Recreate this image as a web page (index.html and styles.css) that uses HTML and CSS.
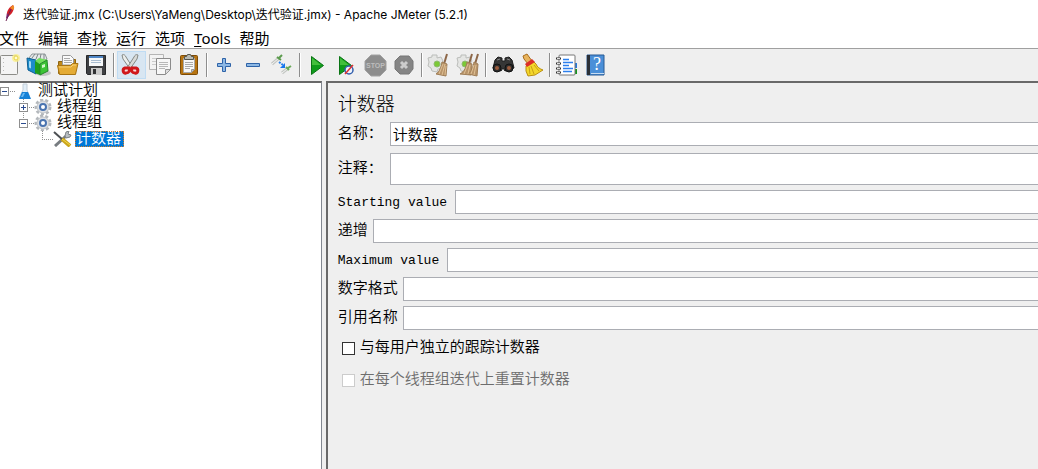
FILE: index.html
```html
<!DOCTYPE html>
<html lang="zh-CN">
<head>
  <meta charset="UTF-8">
  <meta name="viewport" content="width=device-width, initial-scale=1">
  <title>Apache JMeter (5.2.1)</title>
  <link rel="stylesheet" href="styles.css">
</head>
<body>
  <header class="titlebar">
    <svg class="app-icon" width="14" height="18" viewBox="0 0 14 18">
      <path d="M5 12C4 8 7 3 11 1c2 3 0 8-4 11z" fill="#d22128"/>
      <path d="M8 4l3-3c2 2 1 4 0 5z" fill="#f08a24"/>
      <path d="M5 9l2 3-2 3-1-1z" fill="#7c2a7a"/>
      <path d="M9 5L4 17" stroke="#6d2052"/>
    </svg>
    <span>迭代验证.jmx (C:\Users\YaMeng\Desktop\迭代验证.jmx) - Apache JMeter (5.2.1)</span>
  </header>

  <nav class="menubar">
    <button>文件</button>
    <button>编辑</button>
    <button>查找</button>
    <button>运行</button>
    <button>选项</button>
    <button><u>T</u>ools</button>
    <button>帮助</button>
  </nav>

  <div class="toolbar">
    <button aria-label="新建">
      <svg viewBox="0 0 29 28">
        <rect x="5.500" y="4.500" width="17" height="19" rx="1" fill="#f4f4f4" stroke="#8c8c88"/>
        <path d="M8.500 7v15" stroke="#bbb" stroke-dasharray="1 3"/>
        <circle cx="21" cy="7" r="4" fill="#fbf08a" opacity=".8"/>
        <circle cx="21" cy="7" r="2" fill="#fffbd0" stroke="#e8d44d"/>
      </svg>
    </button>
    <button aria-label="模板">
      <svg viewBox="0 0 29 28">
        <ellipse cx="19" cy="22" rx="8" ry="3" fill="#c4c4c4"/>
        <path d="M5 7l3-4 13 0 2 5-8 4z" fill="#e6e9ea" stroke="#8e9699"/>
        <path d="M8 7l3-4M12 8l2-5M16 8l1-5M20 8V3" stroke="#7d8587"/>
        <path d="M3 7l9 2v14l-8-4z" fill="#1d8ccb" stroke="#0d5e93"/>
        <path d="M5 10l2 .5v7l-2-1z" fill="#9fdaf6"/>
        <path d="M11 10l4-3 9 2-8 4z" fill="#73e05d"/>
        <path d="M11 10l5 3v11l-5-2z" fill="#1f9e1d"/>
        <path d="M16 13l7-4 1 11-8 4z" fill="#3cc435" stroke="#24872a"/>
        <path d="M18 14l3-1v3l-3 1z" fill="#d3f7cc"/>
      </svg>
    </button>
    <button aria-label="打开">
      <svg viewBox="0 0 29 28">
        <path d="M5.500 10.500h4l1-2h12v14h-17z" fill="#c08a1b" stroke="#8f6410"/>
        <path d="M9.500 14V4.500h8l3 3V14z" fill="#fafafa" stroke="#999"/>
        <path d="M11 7.500h6M11 9.500h8M11 11.500h8" stroke="#aaa"/>
        <path d="M4.500 14.500h13l2-2h5.500l-2.500 11h-16z" fill="#e4ab35" stroke="#a87514"/>
        <path d="M6 16h12l2-2h3" fill="none" stroke="#f5cf77"/>
      </svg>
    </button>
    <button aria-label="保存">
      <svg viewBox="0 0 29 28">
        <path d="M4.500 4.500h19v19h-18l-1-1z" fill="#3f4043" stroke="#28292b"/>
        <path d="M7 5h14v10H7z" fill="#f5f7f9"/>
        <path d="M7 5h14v2H7z" fill="#4f86c6"/>
        <path d="M9 9.500h10M9 11.500h10" stroke="#a8bcd0"/>
        <path d="M9 17h11v7H9z" fill="#c9c9c9"/>
        <path d="M11 18h3v5h-3z" fill="#303134"/>
      </svg>
    </button>
    <span class="separator"></span>
    <button class="active" aria-label="剪切">
      <svg viewBox="0 0 29 28">
        <path d="M5 4c2-1 3 0 4 2l7 11-3 1L6 8z" fill="#eceeec" stroke="#858985"/>
        <path d="M21 4c-2-1-3 0-4 2l-7 11 3 1 7-10z" fill="#d8dad8" stroke="#858985"/>
        <path d="M12 17l-4 0c-3 1-2 6 1 5 3 0 4-2 3-5zM15 17l4 0c3 1 2 6-1 5-3 0-4-2-3-5z" fill="#f8dcdc" stroke="#d0181c" stroke-width="3"/>
      </svg>
    </button>
    <button aria-label="复制">
      <svg viewBox="0 0 29 28">
        <path d="M3.500 3.500h14v15h-14z" fill="#f3f3f3" stroke="#b5b5b5"/>
        <path d="M6 7.500h8M6 10.500h8M6 13.500h6" stroke="#ccc"/>
        <path d="M10.500 7.500h14v11l-5 5h-9z" fill="#f7f7f7" stroke="#8b8b8b"/>
        <path d="M13 11.500h9M13 13.500h9M13 15.500h9M13 17.500h6" stroke="#b8b8b8"/>
        <path d="M19.500 23.500v-5h5z" fill="#ddd" stroke="#999"/>
      </svg>
    </button>
    <button aria-label="粘贴">
      <svg viewBox="0 0 29 28">
        <rect x="5.500" y="4.500" width="17" height="19" rx="1" fill="#b77411" stroke="#7d4c08"/>
        <path d="M8.500 7.500h11v11l-3 3h-8z" fill="#f8f8f8" stroke="#aaa"/>
        <path d="M10 11.500h8M10 13.500h8M10 15.500h8M10 17.500h5" stroke="#aaa"/>
        <path d="M16.500 21.500v-3h3z" fill="#ccc" stroke="#999"/>
        <path d="M9.500 8.500v-3h2l1-2h3l1 2h2v3z" fill="#b9bbb5" stroke="#55574f"/>
      </svg>
    </button>
    <span class="separator"></span>
    <button aria-label="展开">
      <svg viewBox="0 0 29 28">
        <path d="M12.500 7.500h3v5h5v3h-5v5h-3v-5h-5v-3h5z" fill="#8db8e4" stroke="#2e63a8"/>
      </svg>
    </button>
    <button aria-label="折叠">
      <svg viewBox="0 0 29 28">
        <path d="M7.500 12.500h13v3h-13z" fill="#8db8e4" stroke="#2e63a8"/>
      </svg>
    </button>
    <button aria-label="切换">
      <svg viewBox="0 0 29 28">
        <path d="M4 13l7-6" stroke="#c3c6c3" stroke-width="3"/>
        <path d="M4 13l7-6" stroke="#f4f5f4"/>
        <path d="M9 6l4 3M11 7l3-3" stroke="#5c9c4e" stroke-width="2"/>
        <path d="M14 22l5-4" stroke="#c3c6c3" stroke-width="3"/>
        <path d="M14 22l5-4" stroke="#f4f5f4"/>
        <path d="M18 16l3 3M20 17l3-2" stroke="#69a957" stroke-width="2"/>
        <path d="M11 11l4 3" stroke="#2680ec" stroke-width="2" stroke-dasharray="2 1"/>
        <path d="M17 12v5h-5z" fill="#1676ed"/>
      </svg>
    </button>
    <span class="separator"></span>
    <button aria-label="启动">
      <svg viewBox="0 0 29 28">
        <path d="M8.500 5.500l12 9-12 9z" fill="#0f9c1b" stroke="#0a7414"/>
        <path d="M9 7l9 7H9z" fill="#42bf3c"/>
      </svg>
    </button>
    <button aria-label="不停顿开始">
      <svg viewBox="0 0 29 28">
        <path d="M7.500 5.500l12 9-12 9z" fill="#0f9c1b" stroke="#0a7414"/>
        <path d="M8 7l9 7H8z" fill="#42bf3c"/>
        <circle cx="17" cy="19" r="4" fill="#edf2fa" stroke="#315eac" stroke-width="1.500"/>
        <path d="M13 23l8-9" stroke="#e03030" stroke-width="1.500"/>
      </svg>
    </button>
    <button aria-label="停止" disabled>
      <svg viewBox="0 0 29 28">
        <path d="M10 4h9l6 6v9l-6 6h-9l-6-6v-9z" fill="#8d8d8d" stroke="#a2a2a2"/>
        <text class="stop-text" x="14.500" y="17" text-anchor="middle">STOP</text>
      </svg>
    </button>
    <button aria-label="关闭" disabled>
      <svg viewBox="0 0 29 28">
        <path d="M10 5h9l4 5v8l-4 5h-9l-5-5v-8z" fill="#858585" stroke="#777"/>
        <path d="M11 11l6 6M17 11l-6 6" stroke="#ccc" stroke-width="3"/>
      </svg>
    </button>
    <span class="separator"></span>
    <button aria-label="清除">
      <svg viewBox="0 0 29 28">
        <path d="M7 4h5v3l4-1 2 4-2 3 1 4-4 1-1 3-5-1-1-3-3-2 1-4-1-4 4-1z" fill="#e5e6e4" stroke="#bbbdba"/>
        <circle cx="12" cy="13" r="3" fill="#7bc936" stroke="#8fba70"/>
        <path d="M22 3l-3 10" stroke="#8d6748" stroke-width="2"/>
        <path d="M17 11l5 2-1 12-10-2c4-3 5-7 6-12z" fill="#b8946a" stroke="#a07f58"/>
        <path d="M18 13l-4 10M20 13l-3 11M21 15l-1 9" stroke="#dfc094"/>
      </svg>
    </button>
    <button aria-label="清除全部">
      <svg viewBox="0 0 29 28">
        <path d="M7 4h5v3l4-1 2 4-2 3 1 4-4 1-1 3-5-1-1-3-3-2 1-4-1-4 4-1z" fill="#e5e6e4" stroke="#bbbdba"/>
        <circle cx="11" cy="13" r="3" fill="#7bc936" stroke="#8fba70"/>
        <path d="M18 3l-3 10M24 3l-3 10" stroke="#8d6748" stroke-width="2"/>
        <path d="M13 11l5 2-1 11-11-1c5-3 6-7 7-12z" fill="#b8946a" stroke="#a07f58"/>
        <path d="M20 11l4 2-1 12-9-2c4-3 5-7 6-12z" fill="#b8946a" stroke="#a07f58"/>
        <path d="M14 13l-4 10M16 14l-2 9M20 14l-3 9M22 14l-2 10" stroke="#dfc094"/>
      </svg>
    </button>
    <span class="separator"></span>
    <button aria-label="查找">
      <svg viewBox="0 0 29 28">
        <path d="M6 9l3-3 4 1v3h3V7l4-1 3 3 2 8-9 3-2-3-2 3-8-3z" fill="#363636" stroke="#1d1d1d"/>
        <path d="M8 9l3-1M18 8l3 1" stroke="#888"/>
        <circle cx="8" cy="17" r="4" fill="#2c2c2c" stroke="#111"/>
        <circle cx="20" cy="17" r="4" fill="#2c2c2c" stroke="#111"/>
        <circle cx="8" cy="17" r="2" fill="#9b5b3d"/>
        <circle cx="20" cy="17" r="2" fill="#9b5b3d"/>
      </svg>
    </button>
    <button aria-label="重置查找">
      <svg viewBox="0 0 29 28">
        <path d="M5 5l4-2 5 7-4 3-4-5z" fill="#e8b45d" stroke="#a96c1c"/>
        <path d="M8 15l7-5 3 3c1 3 4 5 7 6l-8 5-7 1-2-5z" fill="#f3d72b" stroke="#b98e13"/>
        <path d="M11 16l1 7M13 15l3 8M16 14l5 6" stroke="#c89f16"/>
        <path d="M7 13l7-5 3 3-8 5z" fill="#dc2e28"/>
      </svg>
    </button>
    <span class="separator"></span>
    <button aria-label="函数助手对话框">
      <svg viewBox="0 0 29 28">
        <path d="M20 12h4v5h-4z" fill="#2678da"/>
        <path d="M20 18h4v5h-4z" fill="#14951c"/>
        <rect x="6" y="4" width="16" height="20" rx="1" fill="#fff" stroke="#777"/>
        <path d="M10 8.500h6M10 11.500h10M10 14.500h6M10 17.500h10M10 20.500h9" stroke="#2d80ed" stroke-width="1.500"/>
        <path d="M3 7.500h5M3 12.500h5M3 17.500h5M3 21.500h5" stroke="#333" stroke-width="2"/>
        <path d="M4 7.500h3M4 12.500h3M4 17.500h3M4 21.500h3" stroke="#ddd"/>
      </svg>
    </button>
    <button aria-label="帮助">
      <svg viewBox="0 0 29 28">
        <path d="M5 4h17v20H5z" fill="#4a8fd8" stroke="#285b94"/>
        <path d="M5 4h3v20H5z" fill="#2b3037"/>
        <path d="M9 22.500h13" stroke="#c7dcf2"/>
        <text class="help-text" x="15" y="19" text-anchor="middle">?</text>
      </svg>
    </button>
  </div>

  <main class="workspace">
    <aside class="tree-panel">
      <ul class="tree">
        <li>
          <div class="node">
            <button class="expander" aria-label="折叠">
              <svg viewBox="0 0 15 16">
                <path d="M10 8.500h5" class="dots"/>
                <rect x=".5" y="4.500" width="8" height="8" class="box"/>
                <path d="M2 8.500h5" class="sign"/>
              </svg>
            </button>
            <svg class="node-icon" viewBox="0 0 19 16">
              <path d="M8 1h4v6l3 8H4l4-8z" fill="#e2eef8" stroke="#c3ced8"/>
              <path d="M7 9h6l3 7H4z" fill="#1681d6"/>
              <path d="M8 10h2l-2 4H6z" fill="#65b7f3"/>
            </svg>
            <span class="node-label">测试计划</span>
          </div>
          <ul>
            <li>
              <div class="node">
                <button class="expander" aria-label="展开">
                  <svg viewBox="0 0 15 16">
                    <path d="M4.500 0v16M10 8.500h5" class="dots"/>
                    <rect x=".5" y="4.500" width="8" height="8" class="box"/>
                    <path d="M2 8.500h5M4.500 6v5" class="sign"/>
                  </svg>
                </button>
                <svg class="node-icon" viewBox="0 0 19 16">
                  <circle cx="9" cy="8" r="7" class="teeth"/>
                  <circle cx="9" cy="8" r="6" fill="#dde0e4" stroke="#c2c6ca"/>
                  <circle cx="9" cy="8" r="3" fill="#fff" stroke="#4a74b0" stroke-width="2"/>
                </svg>
                <span class="node-label">线程组</span>
              </div>
            </li>
            <li>
              <div class="node">
                <button class="expander" aria-label="折叠">
                  <svg viewBox="0 0 15 16">
                    <path d="M4.500 0v5M10 8.500h5" class="dots"/>
                    <rect x=".5" y="4.500" width="8" height="8" class="box"/>
                    <path d="M2 8.500h5" class="sign"/>
                  </svg>
                </button>
                <svg class="node-icon" viewBox="0 0 19 16">
                  <circle cx="9" cy="8" r="7" class="teeth"/>
                  <circle cx="9" cy="8" r="6" fill="#dde0e4" stroke="#c2c6ca"/>
                  <circle cx="9" cy="8" r="3" fill="#fff" stroke="#4a74b0" stroke-width="2"/>
                </svg>
                <span class="node-label">线程组</span>
              </div>
              <ul>
                <li>
                  <div class="node">
                    <svg class="branch" viewBox="0 0 15 16">
                      <path d="M4.500 0v9M4 8.500h11" class="dots"/>
                    </svg>
                    <svg class="node-icon" viewBox="0 0 19 16">
                      <path d="M2 15L13 5" stroke="#777c80" stroke-width="3"/>
                      <path d="M12 5l1-4 3-1-1 3 3 1-1 2-4 1z" fill="#b9bfc3" stroke="#7c8286"/>
                      <path d="M1 1l9 8" stroke="#4b4f52" stroke-width="2"/>
                      <path d="M9 8l8 7" stroke="#caa51c" stroke-width="4"/>
                      <path d="M9 8l8 6" stroke="#f4d94d"/>
                    </svg>
                    <span class="node-label selected">计数器</span>
                  </div>
                </li>
              </ul>
            </li>
          </ul>
        </li>
      </ul>
    </aside>

    <form class="editor">
      <h1>计数器</h1>
      <div class="field">
        <label class="short" for="name">名称：</label>
        <input type="text" id="name" value="计数器">
      </div>
      <div class="field comment">
        <label class="short" for="comment">注释：</label>
        <textarea id="comment" rows="1"></textarea>
      </div>
      <div class="field">
        <label class="start" for="start">Starting value</label>
        <input type="text" id="start">
      </div>
      <div class="field">
        <label for="increment">递增</label>
        <input type="text" id="increment">
      </div>
      <div class="field">
        <label class="max" for="max">Maximum value</label>
        <input type="text" id="max">
      </div>
      <div class="field">
        <label for="format">数字格式</label>
        <input type="text" id="format">
      </div>
      <div class="field">
        <label for="reference">引用名称</label>
        <input type="text" id="reference">
      </div>
      <div class="check">
        <input type="checkbox" id="per-user">
        <label for="per-user">与每用户独立的跟踪计数器</label>
      </div>
      <div class="check">
        <input type="checkbox" id="reset" disabled>
        <label for="reset">在每个线程组迭代上重置计数器</label>
      </div>
    </form>
  </main>
</body>
</html>
```
FILE: styles.css
```css
:root {
  --panel-bg: #efefef;
  --line: #a0a0a0;
  --dark-line: #696969;
  --field-border: #abadb3;
  --selection: #0078d7;
  --ui-font: "Noto Sans", "Noto Sans CJK SC", sans-serif;
  --form-font: "Liberation Mono", "Noto Sans CJK SC", monospace;
}
* { box-sizing: border-box; }
body {
  margin: 0;
  min-height: 100vh;
  display: flex;
  flex-direction: column;
  overflow: hidden;
  background-color: #fff;
  color: #000;
  font-family: var(--ui-font);
}
button {
  padding: 0;
  border: 0;
  background: none;
  color: inherit;
  font: inherit;
}
svg {
  display: block;
  fill: none;
}
.titlebar {
  display: flex;
  align-items: center;
  gap: 7px;
  height: 26px;
  padding-left: 2px;
  font: 12px Inter, "Noto Sans CJK SC", sans-serif;
  white-space: nowrap;
}
.menubar {
  display: flex;
  align-items: center;
  gap: 9px;
  height: 23px;
  margin-left: -1px;
  padding-top: 2px;
  border-bottom: 1px solid var(--line);
  font-size: 15px;
  line-height: 20px;
}
.menubar u {
  text-underline-offset: 2px;
}
.toolbar {
  display: flex;
  align-items: center;
  height: 32px;
  background-color: var(--panel-bg);
}
.toolbar button {
  flex: none;
  width: 29px;
  height: 28px;
}
.toolbar button:first-child {
  margin-left: -5px;
}
.toolbar button.active {
  background-color: #d8e6f2;
  outline: 1px solid #c0dcf3;
  outline-offset: -1px;
}
.separator {
  flex: none;
  width: 2px;
  height: 24px;
  margin: 0 2px;
  border-left: 1px solid #8d8d8d;
  border-right: 1px solid #fff;
}
.stop-text {
  fill: #bdbdbd;
  font: bold 7px "Liberation Sans", sans-serif;
}
.help-text {
  fill: #fff;
  font: 18px "Liberation Serif", serif;
}
.workspace {
  flex: 1;
  display: flex;
  gap: 4px;
  background-color: var(--panel-bg);
}
.tree-panel {
  flex: none;
  width: 31%;
  border-top: 2px solid var(--dark-line);
  border-right: 1px solid #828790;
  background-color: #fff;
}
.tree,
.tree ul {
  margin: 0;
  padding: 0;
  list-style: none;
}
.tree ul {
  padding-left: 19px;
}
.node {
  display: flex;
  align-items: center;
  height: 16px;
  font: 350 15px/18px var(--form-font);
}
.expander,
.branch {
  width: 15px;
  height: 16px;
}
.node-icon {
  width: 19px;
  height: 16px;
  margin-right: 3px;
}
.node-label {
  height: 16px;
  padding: 0 3px 0 1px;
}
.node-label.selected {
  background-color: var(--selection);
  color: #fff;
  outline: 1px dotted #d98028;
  outline-offset: -1px;
}
.dots {
  stroke: #909090;
  stroke-dasharray: 1 1;
}
.box {
  fill: #fff;
  stroke: #8f8f8f;
}
.sign {
  stroke: #2b4b8f;
}
.teeth {
  stroke: #b4b8bc;
  stroke-width: 3;
  stroke-dasharray: 3 2;
}
.editor {
  flex: 1;
  display: flex;
  flex-direction: column;
  gap: 5px;
  padding: 9px 0 0 10px;
  border-top: 2px solid var(--dark-line);
  border-left: 2px solid var(--dark-line);
  font: 350 15px/22px var(--form-font);
}
.editor h1 {
  height: 25px;
  margin: 0;
  font-size: 19px;
  font-weight: 300;
  line-height: 28px;
}
.field {
  display: flex;
  align-items: center;
  gap: 5px;
}
.field label {
  flex: none;
  padding-top: 2px;
}
.field .short {
  width: 47px;
}
.field .start,
.field .max {
  font-size: 13px;
}
.field .start {
  width: 112px;
}
.field .max {
  width: 104px;
}
.field input,
.field textarea {
  flex: 1;
  min-width: 0;
  height: 24px;
  margin: 0;
  padding: 0 2px;
  border: 1px solid var(--field-border);
  border-right: 0;
  border-radius: 0;
  background-color: #fff;
  color: #000;
  font: inherit;
  line-height: 20px;
  outline: none;
  resize: none;
}
.field textarea {
  height: 32px;
}
.comment {
  padding-top: 2px;
}
.check {
  display: flex;
  align-items: center;
  gap: 5px;
  height: 27px;
  padding-left: 4px;
}
.check input {
  appearance: none;
  width: 13px;
  height: 13px;
  margin: 0;
  border: 1px solid #333;
  background-color: #fff;
}
.check input:checked {
  background-color: var(--selection);
}
.check input:disabled {
  border-color: #ccc;
}
.check label {
  padding-top: 1px;
}
.check input:disabled + label {
  color: #6d6d6d;
}
```
